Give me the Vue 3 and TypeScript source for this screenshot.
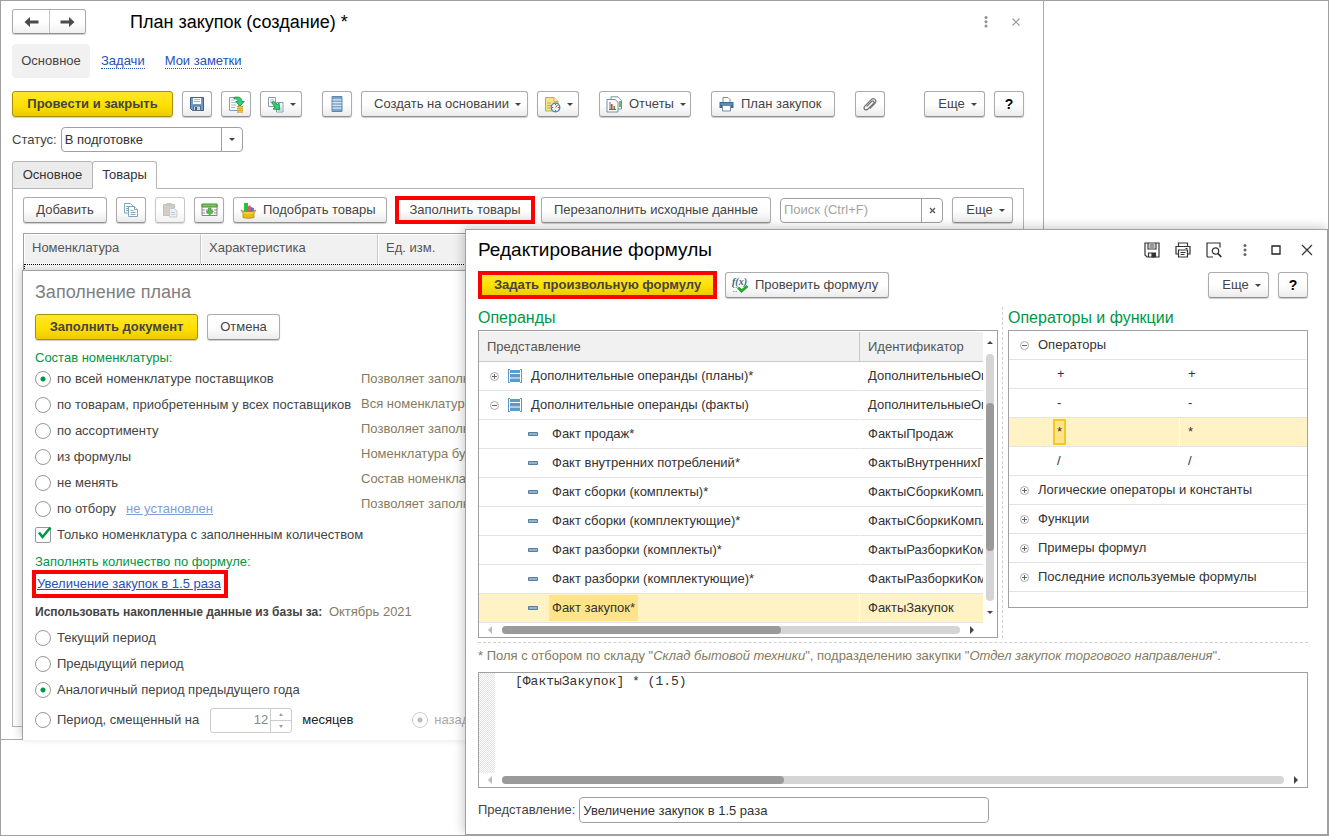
<script setup lang="ts">
import { ref } from 'vue'

interface Option { id: string; label: string }
interface Operand { name: string; ident: string; kind: 'closed' | 'open' | 'leaf'; selected?: boolean }
interface Operator { name: string; value?: string; kind: 'closed' | 'open' | 'leaf'; selected?: boolean }

const status = ref('В подготовке')
const search = ref('')
const source = ref('all')
const period = ref('same')
const direction = ref('back')
const onlyFilled = ref(true)
const months = ref('12')
const formula = ref('[ФактыЗакупок] * (1.5)')
const caption = ref('Увеличение закупок в 1.5 раза')

const sources: Option[] = [
  { id: 'all', label: 'по всей номенклатуре поставщиков' },
  { id: 'bought', label: 'по товарам, приобретенным у всех поставщиков' },
  { id: 'range', label: 'по ассортименту' },
  { id: 'formula', label: 'из формулы' },
  { id: 'keep', label: 'не менять' },
  { id: 'filter', label: 'по отбору' },
]
const hints: string[] = [
  'Позволяет заполнить', 'Вся номенклатура', 'Позволяет заполнить',
  'Номенклатура будет', 'Состав номенклатуры', 'Позволяет заполнить',
]
const periods: Option[] = [
  { id: 'current', label: 'Текущий период' },
  { id: 'previous', label: 'Предыдущий период' },
  { id: 'same', label: 'Аналогичный период предыдущего года' },
]
const operands: Operand[] = [
  { name: 'Дополнительные операнды (планы)*', ident: 'ДополнительныеОперанды', kind: 'closed' },
  { name: 'Дополнительные операнды (факты)', ident: 'ДополнительныеОперанды', kind: 'open' },
  { name: 'Факт продаж*', ident: 'ФактыПродаж', kind: 'leaf' },
  { name: 'Факт внутренних потреблений*', ident: 'ФактыВнутреннихПотреблений', kind: 'leaf' },
  { name: 'Факт сборки (комплекты)*', ident: 'ФактыСборкиКомплекты', kind: 'leaf' },
  { name: 'Факт сборки (комплектующие)*', ident: 'ФактыСборкиКомплектующие', kind: 'leaf' },
  { name: 'Факт разборки (комплекты)*', ident: 'ФактыРазборкиКомплекты', kind: 'leaf' },
  { name: 'Факт разборки (комплектующие)*', ident: 'ФактыРазборкиКомплектующие', kind: 'leaf' },
  { name: 'Факт закупок*', ident: 'ФактыЗакупок', kind: 'leaf', selected: true },
]
const operators: Operator[] = [
  { name: 'Операторы', kind: 'open' },
  { name: '+', value: '+', kind: 'leaf' },
  { name: '-', value: '-', kind: 'leaf' },
  { name: '*', value: '*', kind: 'leaf', selected: true },
  { name: '/', value: '/', kind: 'leaf' },
  { name: 'Логические операторы и константы', kind: 'closed' },
  { name: 'Функции', kind: 'closed' },
  { name: 'Примеры формул', kind: 'closed' },
  { name: 'Последние используемые формулы', kind: 'closed' },
]
</script>

<template>
  <div class="desktop">
    <main class="plan">
      <header class="plan-head">
        <div class="history">
          <button type="button" aria-label="Назад">
            <svg width="15" height="12" viewBox="0 0 15 12"><path d="M0.500 6L6 1v3.500h8.500v3H6V11z" fill="#4a4a4a" /></svg>
          </button>
          <button type="button" aria-label="Вперед">
            <svg width="15" height="12" viewBox="0 0 15 12"><path d="M14.500 6L9 1v3.500H0.500v3H9V11z" fill="#4a4a4a" /></svg>
          </button>
        </div>
        <h1>План закупок (создание) *</h1>
        <button class="bare" type="button" aria-label="Меню">
          <svg width="16" height="16" viewBox="0 0 16 16" fill="#909090"><circle cx="8" cy="3.500" r="1.500" /><circle cx="8" cy="7.700" r="1.500" /><circle cx="8" cy="12" r="1.500" /></svg>
        </button>
        <button class="bare" type="button" aria-label="Закрыть">
          <svg width="16" height="16" viewBox="0 0 16 16"><path d="M4.500 4.500l7 7M11.500 4.500l-7 7" stroke="#999" stroke-width="1.100" /></svg>
        </button>
      </header>

      <nav class="sections">
        <a class="current" href="#main">Основное</a>
        <a class="dotted" href="#tasks">Задачи</a>
        <a class="dotted" href="#notes">Мои заметки</a>
      </nav>

      <div class="bar">
        <button class="btn primary w161" type="button">Провести и закрыть</button>
        <button class="btn icon" type="button" aria-label="Записать">
          <svg width="16" height="16" viewBox="0 0 16 16">
            <path d="M1.500 1.500h13v13h-11l-2-2z" fill="#6d9bcb" stroke="#3f5f86" />
            <path d="M4 2h8v6H4z" fill="#fff" /><path d="M5 3.500h6M5 5.500h6" stroke="#9db4cc" />
            <path d="M4.500 10h7v4.500h-7z" fill="#d5d5d5" stroke="#5a6d85" /><path d="M6 11h2v3H6z" fill="#3f5f86" />
          </svg>
        </button>
        <button class="btn icon" type="button" aria-label="Провести">
          <svg width="17" height="17" viewBox="0 0 17 17">
            <path d="M1.500 1.500h9v13h-9z" fill="#fff" stroke="#7f9db5" /><path d="M3 4h3M3 6.500h5M3 9h5M3 11.500h4" stroke="#a9b9c6" />
            <path d="M6 1.500c5-1.500 8 .5 8 4h2.300L12 10 7.800 5.500H10c0-2-1.500-3-4-2.500z" fill="#2fd06f" stroke="#148b43" stroke-width=".8" />
            <path d="M9 10.500h6v5.500H9z" fill="#f3cd4b" /><path d="M9 10.500h6M9 12.500h6M9 14.500h6M9 16.300h6" stroke="#c99a1e" stroke-width=".8" />
          </svg>
        </button>
        <button class="btn icon drop" type="button" aria-label="Движения">
          <svg width="17" height="17" viewBox="0 0 17 17">
            <path d="M1.500 1.500h7v9h-7z" fill="#fff" stroke="#7f9db5" /><path d="M3 4h4M3 6h4" stroke="#a9b9c6" />
            <path d="M9.500 6.500h6.500v9.500H9.500z" fill="#fff" stroke="#7f9db5" /><path d="M11 12h4M11 14h4" stroke="#a9b9c6" />
            <path d="M4.500 6.500l2.200-1.300 3.400 3.500 2-1.700.6 6.700-6.700-.6 2-1.900z" fill="#2fd06f" stroke="#148b43" stroke-width=".8" />
          </svg>
          <i class="caret"></i>
        </button>
        <button class="btn icon apart" type="button" aria-label="Структура">
          <svg width="12" height="16" viewBox="0 0 12 16"><path d="M1 .5h10v15H1z" fill="#7ea3c4" stroke="#5d86ab" /><path d="M1.500 3.800h9M1.500 6.600h9M1.500 9.400h9M1.500 12.200h9" stroke="#d6e8f5" stroke-width="1.300" /></svg>
        </button>
        <button class="btn drop w167" type="button">Создать на основании<i class="caret"></i></button>
        <button class="btn icon drop" type="button" aria-label="Напоминания">
          <svg width="17" height="17" viewBox="0 0 17 17">
            <path d="M1.500 1.500h8.500l4 4V15h-12.500z" fill="#f6e193" stroke="#cba74a" /><path d="M10 1.500v4h4" fill="#fff3c4" stroke="#cba74a" /><path d="M3 7h4M3 9.500h4M3 12h3" stroke="#c9a950" />
            <circle cx="11.500" cy="11.500" r="4.300" fill="#eef5ff" stroke="#4d7db3" stroke-width="1.300" /><path d="M11.500 11.500l2-2.500M11.500 8v1M11.500 14v1M8 11.500h1M14 11.500h1" stroke="#c33" />
          </svg>
          <i class="caret"></i>
        </button>
        <button class="btn pic drop apart w92" type="button">
          <svg width="17" height="17" viewBox="0 0 17 17">
            <path d="M5 .8h7l3.500 3.500V13H5z" fill="#fff" stroke="#778ea3" /><path d="M14 5v6" stroke="#43a047" stroke-width="1.500" />
            <path d="M1 3.500h8l3 2.500v10H1z" fill="#fff" stroke="#778ea3" /><path d="M4 6v7M3 13.500h7" stroke="#666" /><path d="M5.800 8v5" stroke="#e23b2e" stroke-width="1.600" /><path d="M8.300 10v3" stroke="#3a9e3a" stroke-width="1.600" />
          </svg>
          <span>Отчеты</span><i class="caret"></i>
        </button>
        <button class="btn pic apart w124" type="button">
          <svg width="16" height="16" viewBox="0 0 16 16">
            <path d="M4.500 6V1.500h5l2 2V6" fill="#fff" stroke="#6f8aa5" /><path d="M1 6h14v6H1z" fill="#3b6a97" /><path d="M2 8h12" stroke="#86aacb" />
            <path d="M4 9.500h8V15H4z" fill="#fff" stroke="#6f8aa5" />
          </svg>
          <span>План закупок</span>
        </button>
        <button class="btn icon apart" type="button" aria-label="Файлы">
          <svg width="16" height="16" viewBox="0 0 16 16"><path d="M4.500 10.500l5-5c1.600-1.500 3.500.3 2 2l-5.500 5.500c-2.500 2.400-5.500-.6-3-3.200l6-6c3-2.900 6.600.7 3.800 3.700l-5 5" fill="none" stroke="#777" stroke-width="1.200" /></svg>
        </button>
        <button class="btn drop push w61" type="button">Еще<i class="caret"></i></button>
        <button class="btn icon help" type="button">?</button>
      </div>

      <div class="status">
        <label for="status">Статус:</label>
        <div class="select">
          <select id="status" v-model="status"><option>В подготовке</option></select>
          <i class="caret"></i>
        </div>
      </div>

      <div class="tabs" role="tablist">
        <button type="button" role="tab">Основное</button>
        <button class="on" type="button" role="tab" aria-selected="true">Товары</button>
      </div>

      <section class="goods">
        <div class="bar">
          <button class="btn w84" type="button">Добавить</button>
          <button class="btn icon" type="button" aria-label="Скопировать">
            <svg width="16" height="16" viewBox="0 0 16 16" fill="#fff" stroke="#7fa6b8"><path d="M1.500 1.500h6l2 2V11h-8z" /><path d="M3 4.500h3M3 6.500h3M3 8.500h3" /><path d="M5.500 4.500h6l3 3v7h-9z" /><path d="M11.500 4.500v3h3M7.500 8.500h3M7.500 10.500h5M7.500 12.500h5" /></svg>
          </button>
          <button class="btn icon off" type="button" aria-label="Вставить" disabled>
            <svg width="16" height="16" viewBox="0 0 16 16"><path d="M1.500 2.500h11v11h-11z" fill="#bdb3aa" stroke="#aaa098" /><path d="M4.500 1h5v3h-5z" fill="#aaa" /><path d="M7.500 6.500h5l2.500 2.500v6H7.500z" fill="#e3e8ec" stroke="#a5b2bd" /><path d="M9 10.500h4M9 12.500h4" stroke="#a5b2bd" /></svg>
          </button>
          <button class="btn icon" type="button" aria-label="Загрузить">
            <svg width="17" height="16" viewBox="0 0 17 16"><path d="M1 2.500h15v11H1z" fill="#fff" stroke="#858585" /><path d="M1 2h15v3H1z" fill="#7dc65a" stroke="#4b8f37" /><path d="M1 8h15M1 11h15" stroke="#858585" stroke-dasharray="3 1" /><path d="M7.500 6h2.500v3h2.500L8.700 13 5 9h2.500z" fill="#57c147" stroke="#35902b" stroke-width=".6" /></svg>
          </button>
          <button class="btn pic w154" type="button">
            <svg width="17" height="17" viewBox="0 0 17 17"><path d="M4 1h4v9H4z" fill="#27c23b" /><path d="M7 5l3-2 3 7H7z" fill="#e9506b" /><path d="M11 5l3 1v5h-4z" fill="#5a6fe0" /><path d="M1 8l3 1.500h8L16 8l-2 3v4.500c-3 1-8 1-11 0V11z" fill="#eab91a" stroke="#a87e07" stroke-width=".7" /><path d="M3.500 11h10" stroke="#fbe064" /></svg>
            <span>Подобрать товары</span>
          </button>
          <div class="mark"><button class="btn w132" type="button">Заполнить товары</button></div>
          <button class="btn w230" type="button">Перезаполнить исходные данные</button>
          <div class="search">
            <input v-model="search" type="text" placeholder="Поиск (Ctrl+F)" aria-label="Поиск">
            <button type="button" aria-label="Очистить"><svg width="7" height="7" viewBox="0 0 7 7"><path d="M1 1l5 5M6 1L1 6" stroke="#555" stroke-width="1.200" /></svg></button>
          </div>
          <button class="btn drop w61" type="button">Еще<i class="caret"></i></button>
        </div>
        <table class="goods-table">
          <thead><tr><th>Номенклатура</th><th>Характеристика</th><th>Ед. изм.</th></tr></thead>
          <tbody><tr><td colspan="3"></td></tr></tbody>
        </table>
      </section>
    </main>

    <section class="fill">
      <h2>Заполнение плана</h2>
      <div class="bar">
        <button class="btn primary w163" type="button">Заполнить документ</button>
        <button class="btn w73" type="button">Отмена</button>
      </div>
      <h3>Состав номенклатуры:</h3>
      <div class="sources">
        <div class="options">
          <div v-for="s in sources" :key="s.id" class="option">
            <label><input v-model="source" type="radio" name="source" :value="s.id">{{ s.label }}</label>
            <a v-if="s.id === 'filter'" class="faded" href="#filter">не установлен</a>
          </div>
        </div>
        <div class="hints"><p v-for="(h, i) in hints" :key="i">{{ h }}</p></div>
      </div>
      <div class="option">
        <label><span class="tick"><input v-model="onlyFilled" type="checkbox"><svg v-if="onlyFilled" width="16" height="16" viewBox="0 0 16 16"><path d="M3 6.500l3.500 4.500L14.500 1.500" fill="none" stroke="#009646" stroke-width="2.600" /></svg></span>Только номенклатура с заполненным количеством</label>
      </div>
      <h3 class="by-formula">Заполнять количество по формуле:</h3>
      <div class="mark link-mark"><a href="#formula">Увеличение закупок в 1.5 раза</a></div>
      <p class="base"><b>Использовать накопленные данные из базы за:</b> <span>Октябрь 2021</span></p>
      <div v-for="p in periods" :key="p.id" class="option">
        <label><input v-model="period" type="radio" name="period" :value="p.id">{{ p.label }}</label>
      </div>
      <div class="option shifted">
        <label><input v-model="period" type="radio" name="period" value="shift">Период, смещенный на</label>
        <div class="spin">
          <input id="months" v-model="months" type="text" disabled>
          <div class="steps">
            <button type="button" disabled aria-label="Больше"><i class="caret up"></i></button>
            <button type="button" disabled aria-label="Меньше"><i class="caret"></i></button>
          </div>
        </div>
        <label class="unit" for="months">месяцев</label>
        <label class="direction"><input v-model="direction" type="radio" name="direction" value="back" disabled>назад</label>
      </div>
    </section>

    <section class="editor">
      <header class="editor-head">
        <h2>Редактирование формулы</h2>
        <button class="bare" type="button" aria-label="Сохранить">
          <svg width="16" height="16" viewBox="0 0 16 16" fill="none" stroke="#333" stroke-width="1.200"><path d="M1 1h14v14H3l-2-2z" /><path d="M4 1v6h8V1M5.500 3h5M5.500 5h5" /><path d="M4.500 15v-4h7v4" /><path d="M8 11.500h3V15H8z" fill="#333" /></svg>
        </button>
        <button class="bare" type="button" aria-label="Печать">
          <svg width="16" height="16" viewBox="0 0 16 16" fill="none" stroke="#333" stroke-width="1.200"><path d="M3.500 4V1h9v3M3.500 12H1V4.500h14V12h-2.500" /><path d="M3.500 8h9v7h-9zM5.500 10.500h5M5.500 12.500h4M10.500 6.500h2" /></svg>
        </button>
        <button class="bare" type="button" aria-label="Просмотр">
          <svg width="16" height="16" viewBox="0 0 16 16" fill="none" stroke="#333" stroke-width="1.200"><path d="M7 15H1.500L1 14V1h13v4.500" /><circle cx="9.500" cy="9" r="3.200" /><path d="M11.800 11.300l3.500 3.700" stroke-width="1.800" /></svg>
        </button>
        <button class="bare" type="button" aria-label="Меню">
          <svg width="16" height="16" viewBox="0 0 16 16" fill="#666"><circle cx="8" cy="3.500" r="1.500" /><circle cx="8" cy="8" r="1.500" /><circle cx="8" cy="12.500" r="1.500" /></svg>
        </button>
        <button class="bare" type="button" aria-label="Развернуть">
          <svg width="16" height="16" viewBox="0 0 16 16"><path d="M4 4h8v8H4z" fill="none" stroke="#222" stroke-width="1.300" /></svg>
        </button>
        <button class="bare" type="button" aria-label="Закрыть">
          <svg width="16" height="16" viewBox="0 0 16 16"><path d="M3 3l10 10M13 3L3 13" stroke="#333" stroke-width="1.200" /></svg>
        </button>
      </header>

      <div class="bar">
        <div class="mark"><button class="btn primary w231" type="button">Задать произвольную формулу</button></div>
        <button class="btn pic check w164" type="button">
          <svg width="17" height="17" viewBox="0 0 17 17"><text x="0" y="8" font-size="10" font-style="italic" font-family="Liberation Serif, serif" font-weight="bold" fill="#35627d">f(x)</text><path d="M1 10.500h5M1 14.500h4M13 10.500h2" stroke="#8ba5b5" stroke-dasharray="1.500 1" /><path d="M6 10.500l3.500 3.500L15.500 9" fill="none" stroke="#2ba52f" stroke-width="2.800" /></svg>
          <span>Проверить формулу</span>
        </button>
        <button class="btn drop push w61" type="button">Еще<i class="caret"></i></button>
        <button class="btn icon help" type="button">?</button>
      </div>

      <div class="panes">
        <div class="pane-left">
          <h3>Операнды</h3>
          <div class="frame">
            <div class="grid-area">
              <table class="grid operands">
                <thead><tr><th>Представление</th><th>Идентификатор</th></tr></thead>
                <tbody>
                  <tr v-for="o in operands" :key="o.name" :class="{ selected: o.selected }">
                    <td>
                      <div :class="['cell', o.kind]">
                        <svg v-if="o.kind !== 'leaf'" class="node" width="9" height="9" viewBox="0 0 9 9" fill="none" stroke="#aaa"><circle cx="4.500" cy="4.500" r="4" /><path d="M2 4.500h5" stroke="#666" /><path v-if="o.kind === 'closed'" d="M4.500 2v5" stroke="#666" /></svg>
                        <svg v-if="o.kind !== 'leaf'" class="group" width="14" height="14" viewBox="0 0 14 14"><path d="M.5 0v14M13.500 0v14" stroke="#5b9bcb" /><path d="M2 1h10v3H2zM2 5h10v3.500H2zM2 9.500h10v3.500H2z" fill="#5b9bcb" /><path d="M0 .5h2M12 .5h2M0 13.500h2M12 13.500h2" stroke="#5b9bcb" /></svg>
                        <svg v-else class="dash" width="10" height="4" viewBox="0 0 10 4"><path d="M.5.500h9v3h-9z" fill="#8fb3cf" stroke="#567f9f" /></svg>
                        <span>{{ o.name }}</span>
                      </div>
                    </td>
                    <td>{{ o.ident }}</td>
                  </tr>
                </tbody>
              </table>
              <div class="vscroll"><i class="caret up"></i><div class="track"><div class="thumb"></div></div><i class="caret"></i></div>
            </div>
            <div class="hscroll in-grid"><i class="caret left"></i><div class="track"><div class="thumb"></div></div><i class="caret right"></i></div>
          </div>
        </div>
        <div class="pane-right">
          <h3>Операторы и функции</h3>
          <div class="frame operators-frame">
            <table class="grid operators">
              <colgroup><col><col class="value-col"></colgroup>
              <tbody>
                <tr v-for="o in operators" :key="o.name" :class="{ selected: o.selected }">
                  <td :colspan="o.value ? 1 : 2">
                    <div :class="['cell', o.kind]">
                      <svg v-if="o.kind !== 'leaf'" class="node" width="9" height="9" viewBox="0 0 9 9" fill="none" stroke="#aaa"><circle cx="4.500" cy="4.500" r="4" /><path d="M2 4.500h5" stroke="#666" /><path v-if="o.kind === 'closed'" d="M4.500 2v5" stroke="#666" /></svg>
                      <span>{{ o.name }}</span>
                    </div>
                  </td>
                  <td v-if="o.value">{{ o.value }}</td>
                </tr>
              </tbody>
            </table>
          </div>
        </div>
      </div>

      <p class="note">* Поля с отбором по складу "<em>Склад бытовой техники</em>", подразделению закупки "<em>Отдел закупок торгового направления</em>".</p>

      <div class="frame code">
        <div class="code-area">
          <div class="gutter"></div>
          <textarea v-model="formula" aria-label="Формула" spellcheck="false"></textarea>
        </div>
        <div class="hscroll"><i class="caret left"></i><div class="track"><div class="thumb"></div></div><i class="caret right"></i></div>
      </div>

      <div class="caption">
        <label for="caption">Представление:</label>
        <input id="caption" v-model="caption" type="text">
      </div>
    </section>
  </div>
</template>

<style>
body { margin: 0; background: #fff; }
</style>

<style scoped>
.desktop, .desktop * { box-sizing: border-box; }
.desktop {
  position: relative;
  min-height: 100vh;
  border: 1px solid #a0a0a0;
  overflow: hidden;
  background: #fff;
  color: #444;
  font: 13px/16px "Liberation Sans", Arial, sans-serif;
  white-space: nowrap;
}
h1, h2, h3, p { margin: 0; font-weight: normal; }
h1, h2 { font-size: 18px; line-height: 22px; color: #000; }
h3 { color: #009646; font-size: 13px; line-height: 16px; }
button, input, select, textarea { font: inherit; color: inherit; margin: 0; }
button { padding: 0; }
a { color: #2552b8; }
svg { flex: none; display: block; }

.plan {
  margin-right: 284px;
  min-height: 739px;
  padding: 8px 19px 12px 11px;
  border-right: 1px solid #aaa;
  border-bottom: 1px solid #aaa;
  display: flex;
  flex-direction: column;
}
.plan-head { display: flex; align-items: center; height: 25px; }
.plan-head h1 { margin: 0 auto 0 44px; }
.history { display: flex; border: 1px solid #a9a9a9; border-bottom-color: #8f8f8f; border-radius: 3px; height: 25px; box-shadow: 0 1px 1px #ccc; }
.history button { width: 36px; border: 0; background: linear-gradient(#fff 50%, #f0f0f0); display: flex; align-items: center; justify-content: center; border-radius: 3px; }
.history button + button { border-left: 1px solid #c4c4c4; border-radius: 0 3px 3px 0; }
.bare { border: 0; background: none; width: 16px; height: 16px; flex: none; }
.plan-head .bare { margin-right: 14px; }
.plan-head .bare:last-child { margin-right: 0; }

.sections { display: flex; align-items: center; height: 34px; margin-top: 10px; gap: 20px; }
.sections .current { color: #444; background: #f1f1f1; border-radius: 4px; text-decoration: none; line-height: 34px; width: 78px; text-align: center; margin-right: -9px; }
.dotted { text-decoration: none; border-bottom: 1px dotted #2552b8; line-height: 14px; }

.bar { display: flex; align-items: center; gap: 9px; height: 26px; }
.plan > .bar { margin-top: 13px; }
.btn {
  height: 26px;
  flex: none;
  display: flex;
  align-items: center;
  justify-content: center;
  border: 1px solid #acacac;
  border-bottom-color: #8f8f8f;
  border-radius: 3px;
  background: linear-gradient(#fff 50%, #ebebeb);
  box-shadow: 0 1px 1px #ccc;
  color: #444;
}
.pic { justify-content: flex-start; padding-left: 6px; }
.pic > svg { width: 17px; margin-right: 6px; }
.icon { width: 30px; }
.icon.drop { width: 42px; }
.icon.drop > svg { margin-right: 6px; }
.drop .caret { margin-left: 6px; margin-right: -6px; }
.icon.drop .caret { margin: 0; }
.primary { font-weight: bold; border-color: #a89000; background: linear-gradient(#ffe72e, #ffe000 55%, #ecca00); }
.apart { margin-left: 11px; }
.push { margin-left: auto; }
.help { font-weight: bold; color: #000; font-size: 14px; }
.off { opacity: .65; }
.w61 { width: 61px; } .w73 { width: 73px; } .w84 { width: 84px; } .w92 { width: 92px; }
.w124 { width: 124px; } .w132 { width: 132px; } .w154 { width: 154px; } .w161 { width: 161px; }
.w163 { width: 163px; } .w164 { width: 164px; } .w167 { width: 167px; } .w230 { width: 230px; } .w231 { width: 231px; }

.caret { flex: none; display: block; width: 0; height: 0; border: 3px solid transparent; border-top-color: #444; border-bottom-width: 0; }
.caret.up { border-top-width: 0; border-bottom: 3px solid #444; }
.caret.left { border: 4px solid transparent; border-left-width: 0; border-right-color: #bbb; }
.caret.right { border: 4px solid transparent; border-right-width: 0; border-left-color: #444; }

.mark { flex: none; border: 4px solid #f00; }
.mark .btn { height: 20px; border: 0; border-radius: 0; box-shadow: none; }
.goods .mark { margin: 0 -3px 0 -1px; }

.status { display: flex; align-items: center; gap: 4px; height: 25px; margin-top: 10px; }
.select { position: relative; width: 182px; height: 25px; }
.select select { width: 100%; height: 100%; appearance: none; border: 1px solid #a0a0a0; border-radius: 4px; background: linear-gradient(#a0a0a0, #a0a0a0) 159px 0 / 1px 100% no-repeat #fff; padding: 0 22px 0 3px; color: #333; }
.select .caret { position: absolute; right: 8px; top: 11px; pointer-events: none; }

.tabs { display: flex; margin-top: 9px; height: 28px; }
.tabs button { width: 81px; height: 28px; border: 1px solid #b5b5b5; border-radius: 3px 3px 0 0; background: #ebebeb; color: #333; }
.tabs .on { width: 65px; margin-left: -1px; background: #fff; border-bottom-color: #fff; z-index: 1; }
.goods { flex: 1; border: 1px solid #b5b5b5; margin-top: -1px; padding: 8px 10px; }
.search { display: flex; width: 163px; height: 25px; border: 1px solid #a0a0a0; border-radius: 4px; }
.search input { flex: 1; min-width: 0; border: 0; background: none; padding: 0 3px; outline: 0; }
.search input::placeholder { color: #a3a3a3; opacity: 1; }
.search button { width: 21px; border: 0; border-left: 1px solid #a0a0a0; background: none; display: flex; align-items: center; justify-content: center; }
.goods-table { width: 100%; margin-top: 10px; border-collapse: separate; border-spacing: 0; table-layout: fixed; border: 1px solid #a0a0a0; }
.goods-table th { height: 30px; padding: 0 7px 2px; text-align: left; font-weight: normal; color: #555; background: #f1f1f1; border: 1px solid #fff; border-right-color: #c8c8c8; width: 177px; }
.goods-table th:last-child { width: auto; }
.goods-table td { height: 29px; padding: 0; border-top: 1px dotted #000; border-left: 1px dotted #000; }

.fill {
  position: absolute;
  left: 21px;
  top: 269px;
  width: 480px;
  height: 470px;
  overflow: hidden;
  padding: 10px 12px 0;
  border: 1px solid #a0a0a0;
  border-bottom: 0;
  background: #fff;
  box-shadow: -2px -2px 8px rgba(0, 0, 0, .18);
}
.fill h2 { color: #808080; }
.fill .bar { margin-top: 11px; }
.fill h3 { margin-top: 10px; }
.sources { display: flex; }
.options { flex: none; width: 326px; }
.option { display: flex; align-items: center; height: 26px; }
.option label { display: flex; align-items: center; gap: 6px; }
.hints { color: #857b61; }
.hints p { line-height: 25px; }
input[type="radio"] { appearance: none; flex: none; width: 16px; height: 16px; border: 1px solid #999; border-radius: 50%; background: #fff; }
input[type="radio"]:checked { background: radial-gradient(circle, #009646 2px, #fff 3px); }
input[type="radio"]:disabled { border-color: #ccc; background: radial-gradient(circle, #bbb 2px, #fff 3px); }
.tick { position: relative; width: 16px; height: 16px; }
.tick input { display: block; appearance: none; width: 16px; height: 16px; border: 1px solid #999; border-radius: 2px; background: #fff; }
.tick svg { position: absolute; left: 1px; top: -1px; pointer-events: none; }
.faded { color: #7d9edb; margin-left: 10px; }
.fill .by-formula { margin-top: 6px; }
.link-mark { width: 196px; height: 28px; line-height: 20px; margin-left: -3px; padding-left: 1px; }
.base { margin-top: 6px; line-height: 16px; margin-bottom: 5px; }
.base b { font-size: 12px; }
.base span { color: #857b61; margin-left: 3px; }
.shifted { height: 34px; }
.spin { display: flex; width: 82px; height: 25px; margin: 0 10px 0 11px; border: 1px solid #ccc; border-radius: 3px; }
.spin input { flex: 1; min-width: 0; border: 0; background: none; text-align: right; padding: 0 2px; color: #888; }
.steps { width: 21px; border-left: 1px solid #ccc; display: flex; flex-direction: column; }
.steps button { flex: 1; border: 0; background: none; display: flex; align-items: center; justify-content: center; opacity: .5; }
.steps button + button { border-top: 1px solid #999; }
.steps .caret { border-left-width: 2px; border-right-width: 2px; }
.unit { color: #222; width: 110px; }
.direction { color: #aaa; }

.editor {
  position: absolute;
  left: 464px;
  right: 0;
  top: 228px;
  min-height: 606px;
  padding: 8px 19px 11px 12px;
  border: 1px solid #a0a0a0;
  background: #fff;
  box-shadow: -2px -2px 10px rgba(0, 0, 0, .2);
}
.editor-head { display: flex; align-items: center; gap: 15px; height: 23px; margin-right: -7px; }
.editor-head h2 { margin-right: auto; font-size: 19px; }
.editor .bar { margin-top: 10px; height: 28px; }
.check { margin-left: -1px; }
.editor h3 { font-size: 16px; line-height: 22px; height: 22px; margin-bottom: 1px; }
.panes { display: flex; margin-top: 8px; padding-bottom: 4px; border-bottom: 1px dashed #d0d0d0; }
.pane-left { flex: 1; min-width: 0; padding-right: 4px; border-right: 1px dashed #d0d0d0; }
.pane-right { width: 305px; padding-left: 5px; flex: none; }
.frame { border: 1px solid #a0a0a0; }
.grid-area { display: flex; padding-top: 1px; }
.grid { flex: 1; min-width: 0; width: 100%; table-layout: fixed; border-collapse: separate; border-spacing: 0; color: #333; }
.grid th { height: 30px; padding: 0 8px; text-align: left; font-weight: normal; color: #555; background: #f1f1f1; border-bottom: 1px solid #c8c8c8; overflow: hidden; }
.grid th:first-child { border-right: 1px solid #c8c8c8; }
.grid th:last-child { width: 123px; }
.grid td { height: 29px; padding: 0 8px; border-bottom: 1px solid #e3e3e3; overflow: hidden; }
.operands td:first-child { padding: 0; border-right: 1px solid transparent; background-clip: padding-box; }
.selected td { background: #fff2c5; }
.cell { display: flex; align-items: center; height: 28px; padding-left: 11px; }
.group { margin-left: 9px; margin-right: 9px; }
.operands .leaf { padding-left: 49px; }
.dash { margin-right: 11px; }
.cell span { line-height: 26px; }
.operands .leaf span { padding: 0 3px; }
.operands .selected .leaf span { background: #ffe48c; }
.vscroll { width: 14px; flex: none; display: flex; flex-direction: column; align-items: center; padding: 9px 0; }
.track { background: #d5d5d5; border-radius: 4px; }
.thumb { background: #9a9a9a; border-radius: 4px; }
.vscroll .track { width: 8px; flex: 1; margin: 10px 0; padding-top: 49px; }
.vscroll .thumb { height: 148px; }
.hscroll { display: flex; align-items: center; height: 14px; padding: 0 9px; gap: 10px; }
.hscroll.in-grid { padding-right: 23px; }
.hscroll .track { flex: 1; height: 8px; }
.hscroll .thumb { height: 8px; width: 36%; }
.hscroll.in-grid .thumb { width: 61%; }
.operators-frame { height: 278px; }
.operators tr:first-child td { height: 28px; }
.operators td { padding: 0; }
.operators td + td { padding-left: 8px; }
.value-col { width: 127px; }
.operators .cell { height: 28px; }
.operators .node { margin-right: 9px; }
.operators .leaf { padding-left: 44px; }
.operators .leaf span { line-height: 22px; padding: 0 2px; border: 2px solid transparent; }
.operators .selected .leaf span { background: #ffe48c; border-color: #f9c81e; }
.operators .selected td:first-child { border-right: 1px solid #fff; }
.note { margin-top: 5px; color: #857b61; }
.code { margin-top: 8px; }
.code-area { display: flex; height: 100px; }
.gutter { width: 16px; background: repeating-conic-gradient(#e2e2e2 0 25%, #fff 0 50%) 0 0 / 2px 2px; }
.code textarea { flex: 1; resize: none; border: 0; outline: 0; padding: 1px 20px; background: none; color: #333; font: 13px/16px "Liberation Mono", "Courier New", monospace; }
.caption { display: flex; align-items: center; gap: 4px; margin-top: 9px; }
.caption input { width: 410px; height: 26px; border: 1px solid #a0a0a0; border-radius: 4px; padding: 0 3px; color: #333; }
</style>
